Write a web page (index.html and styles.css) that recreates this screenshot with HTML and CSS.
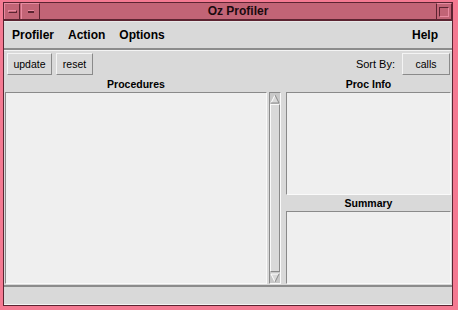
FILE: index.html
```html
<!DOCTYPE html>
<html lang="en">
<head>
  <meta charset="UTF-8" />
  <title>Oz Profiler</title>
  <link rel="stylesheet" href="styles.css">
</head>
<body>

  <div class="frame">
    <div class="window">

      <div class="titlebar">
        <div class="tb-btn tb-menu"><span class="bar-wide"></span></div>
        <div class="tb-btn tb-min"><span class="bar-short"></span></div>
        <div class="title">Oz Profiler</div>
        <div class="tb-btn tb-max"><span class="square"></span></div>
      </div>

      <div class="app">
        <div class="menubar">
          <span class="menu">Profiler</span>
          <span class="menu">Action</span>
          <span class="menu">Options</span>
          <span class="menu help">Help</span>
        </div>

        <div class="toolbar">
          <button class="btn btn-update">update</button>
          <button class="btn btn-reset">reset</button>
          <span class="sort-label">Sort By:</span>
          <button class="btn btn-calls">calls</button>
        </div>

        <div class="panes">
          <div class="left-col">
            <div class="header">Procedures</div>
            <div class="list-row">
              <div class="box procs"></div>
              <div class="scrollbar">
                <div class="arrow">
                  <svg width="10" height="10" viewBox="0 0 10 10">
                    <polygon points="5,1 9,9 1,9" fill="#d9d9d9"/>
                    <polyline points="1,9 5,1" stroke="#fff" fill="none"/>
                    <polyline points="5,1 9,9 1,9" stroke="#8a8a8a" fill="none"/>
                  </svg>
                </div>
                <div class="slider"></div>
                <div class="arrow">
                  <svg width="10" height="10" viewBox="0 0 10 10">
                    <polygon points="1,1 9,1 5,9" fill="#d9d9d9"/>
                    <polyline points="5,9 1,1 9,1" stroke="#fff" fill="none"/>
                    <polyline points="9,1 5,9" stroke="#8a8a8a" fill="none"/>
                  </svg>
                </div>
              </div>
            </div>
          </div>

          <div class="right-col">
            <div class="header">Proc Info</div>
            <div class="box info"></div>
            <div class="header header-sum">Summary</div>
            <div class="box summary"></div>
          </div>
        </div>

        <div class="statusbar"></div>
      </div>

    </div>
  </div>

</body>
</html>
```

FILE: styles.css
```css
body {
  margin: 0;
  font-family: "Liberation Sans", Arial, sans-serif;
  background: #f2758e;
}

.frame {
  width: 458px;
  height: 310px;
  box-sizing: border-box;
  padding: 2px 5px 4px 3px;
  background: #f47a92;
}

.window {
  height: 100%;
  box-sizing: border-box;
  border: 1px solid #5c2431;
  display: flex;
  flex-direction: column;
}

/* title bar */
.titlebar {
  height: 16px;
  display: flex;
  background: #c26476;
  border-bottom: 2px solid #5c2431;
}

.tb-btn {
  width: 16px;
  box-sizing: border-box;
  border-top: 1px solid #e88aa0;
  border-left: 1px solid #e88aa0;
  border-right: 1px solid #5c2431;
  display: flex;
  align-items: center;
  justify-content: center;
}

.tb-min {
  width: 19px;
  margin-left: 1px;
}

.tb-max {
  border-left: 1px solid #5c2431;
  width: 16px;
}

.bar-wide {
  width: 9px;
  height: 3px;
  border: 1px solid #5c2431;
  border-top-color: #e88aa0;
  border-left-color: #e88aa0;
  box-sizing: border-box;
  background: #c26476;
}

.bar-short {
  width: 6px;
  height: 2px;
  background: #5c2431;
  box-shadow: 0 -1px 0 #e88aa0;
}

.square {
  width: 10px;
  height: 10px;
  box-sizing: border-box;
  border: 1px solid #5c2431;
  border-right-color: #e88aa0;
  border-bottom-color: #e88aa0;
}

.title {
  flex: 1;
  text-align: center;
  font-weight: bold;
  font-size: 12px;
  line-height: 16px;
  color: #1a0a0e;
}

/* application */
.app {
  flex: 1;
  display: flex;
  flex-direction: column;
  background: #d9d9d9;
  border-top: 1px solid #e8e8e8;
}

.menubar {
  height: 26px;
  display: flex;
  align-items: center;
  padding: 0 7px 0 1px;
  border-bottom: 2px solid #8c8c8c;
}

.menu {
  font-weight: bold;
  font-size: 12px;
  padding: 0 7px;
  color: #000;
}

.help {
  margin-left: auto;
}

.toolbar {
  height: 27px;
  display: flex;
  align-items: center;
  padding: 0 2px 0 3px;
  border-top: 1px solid #f4f4f4;
  box-sizing: border-box;
}

.btn {
  font-family: "Liberation Sans", Arial, sans-serif;
  font-size: 10.5px;
  height: 22px;
  padding: 0;
  background: #d9d9d9;
  color: #000;
  border: 1px solid;
  border-color: #f4f4f4 #8a8a8a #8a8a8a #f4f4f4;
}

.btn-update {
  width: 45px;
}

.btn-reset {
  width: 37px;
  margin-left: 4px;
}

.sort-label {
  margin-left: auto;
  font-size: 11px;
  margin-right: 7px;
}

.btn-calls {
  width: 48px;
}

/* panes */
.panes {
  flex: 1;
  display: flex;
  padding: 0 1px 0 1px;
  min-height: 0;
}

.header {
  height: 15px;
  line-height: 15px;
  text-align: center;
  font-weight: bold;
  font-size: 10.5px;
}

.header-sum {
  height: 16px;
  line-height: 16px;
}

.left-col {
  width: 277px;
  display: flex;
  flex-direction: column;
}

.left-col .header {
  width: 262px;
}

.list-row {
  flex: 1;
  display: flex;
  gap: 2px;
  margin-bottom: 1px;
}

.box {
  background: #efefef;
  box-sizing: border-box;
  border: 1px solid;
  border-color: #8a8a8a #fafafa #fafafa #8a8a8a;
}

.procs {
  width: 262px;
}

.scrollbar {
  width: 12px;
  display: flex;
  flex-direction: column;
  box-sizing: border-box;
  border: 1px solid;
  border-color: #8a8a8a #fafafa #fafafa #8a8a8a;
  background: #c8c8c8;
}

.arrow {
  height: 11px;
  display: flex;
  align-items: center;
  justify-content: center;
}

.slider {
  flex: 1;
  box-sizing: border-box;
  background: #d9d9d9;
  border: 1px solid;
  border-color: #fafafa #8a8a8a #8a8a8a #fafafa;
}

.right-col {
  flex: 1;
  margin-left: 4px;
  display: flex;
  flex-direction: column;
}

.info {
  height: 103px;
}

.summary {
  flex: 1;
  margin-bottom: 1px;
}

.statusbar {
  height: 17px;
  border-top: 2px solid #8c8c8c;
  border-bottom: 1px solid #f4f4f4;
}
```
